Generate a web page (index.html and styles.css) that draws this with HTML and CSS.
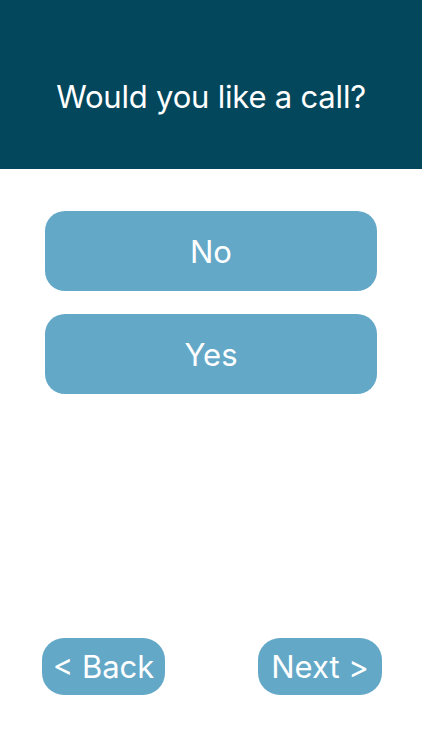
FILE: index.html
```html
<!DOCTYPE html>
<html lang="en">
<head>
<meta charset="utf-8">
<title>Would you like a call?</title>
<link rel="stylesheet" href="styles.css">
</head>
<body>
<div class="page">
  <header class="header">
    <h1 class="title">Would you like a call?</h1>
  </header>
  <main class="options">
    <button class="option">No</button>
    <button class="option">Yes</button>
  </main>
  <footer class="nav">
    <button class="nav-btn back">&lt; Back</button>
    <button class="nav-btn next">Next &gt;</button>
  </footer>
</div>
</body>
</html>
```
FILE: styles.css
```css
html, body {
  margin: 0;
  padding: 0;
  background: #ffffff;
}
body {
  font-family: Inter, "Liberation Sans", Roboto, sans-serif;
  color: #ffffff;
}
.page {
  display: flex;
  flex-direction: column;
  min-height: 750px;
  box-sizing: border-box;
}
.header {
  background: #03475c;
  height: 169px;
  box-sizing: border-box;
  padding-top: 75px;
  display: flex;
  justify-content: center;
}
.title {
  margin: 0;
  font-size: 31px;
  font-weight: 400;
  line-height: 44px;
  letter-spacing: -0.2px;
}
.options {
  display: flex;
  flex-direction: column;
  gap: 23px;
  padding: 42px 45px 0 45px;
}
.option {
  height: 80px;
  border: none;
  border-radius: 20px;
  background: #64a8c8;
  color: #ffffff;
  font-family: inherit;
  font-size: 31px;
  font-weight: 400;
  padding: 0;
}
.nav {
  margin-top: auto;
  display: flex;
  justify-content: space-between;
  padding: 0 40px 55px 42px;
}
.nav-btn {
  height: 57px;
  border: none;
  border-radius: 22px;
  background: #64a8c8;
  color: #ffffff;
  font-family: inherit;
  font-size: 31px;
  font-weight: 400;
  padding: 0;
}
.back { width: 123px; }
.next { width: 124px; }
```
